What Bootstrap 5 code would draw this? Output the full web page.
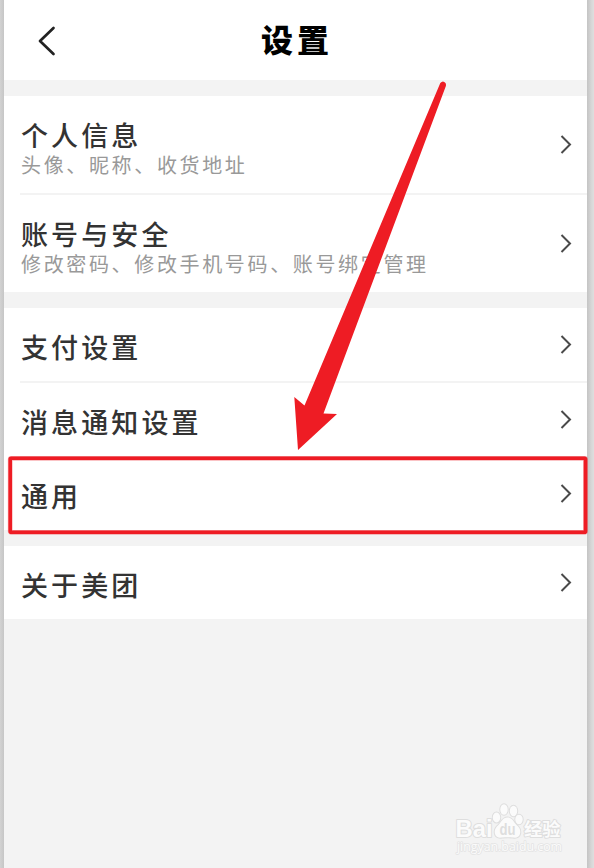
<!DOCTYPE html>
<html lang="zh-CN">
<head>
<meta charset="utf-8">
<meta name="viewport" content="width=device-width, initial-scale=1">
<title>设置</title>
<link href="https://cdn.jsdelivr.net/npm/bootstrap@5.3.0/dist/css/bootstrap.min.css" rel="stylesheet">
<style>
body{background:linear-gradient(90deg,#d2d2d2 0,#c6c6c6 4px,#c6c6c6 586px,#c4c4c4 587px,#d9d9d9 592px,#dedede 594px);font-family:"Noto Sans CJK SC",sans-serif;overflow:hidden}
.screen{width:583px;height:868px;margin-left:4px;background:#f3f3f3}
.topbar{height:80px}
.back{width:20px;height:32px;margin:25px 0 0 32px}
.topbar h1{font-size:32px;line-height:40px;letter-spacing:4px;margin:18px 0 0 205px;font-weight:900;color:#000}
.group{margin-top:16px}
.setting{margin-left:16px;padding-right:15px;color:#333}
.setting+.setting{border-top:2px solid #f3f3f3}
.name{font-size:27px;line-height:30px;letter-spacing:3.1px;font-weight:500;padding-left:1px}
.desc{font-size:20px;line-height:26px;letter-spacing:2.65px;color:#999;white-space:nowrap;padding:2px 0 0 1px}
.chev{width:13px;height:20px;flex:none}
.tall{height:97px;padding-top:24px}
.tall .chev{margin-top:15px}
.short{height:73px;padding-top:24px}
.short .chev{margin-top:3px}
.setting+.tall{height:99px}
.setting+.short{height:75px}
.setting+.short:last-child{height:74px;padding-top:23px}
.marks{left:0;top:0;pointer-events:none}
</style>
</head>
<body>
<main class="screen">
  <header class="topbar bg-white d-flex align-items-start">
    <svg class="back" viewBox="0 0 20 32"><path d="M17.500 3 4 16 17.500 29" fill="none" stroke="#222" stroke-width="2.700" stroke-linecap="round" stroke-linejoin="round"/></svg>
    <h1>设置</h1>
  </header>
  <section class="group bg-white">
    <div class="setting tall d-flex justify-content-between align-items-start">
      <div><div class="name">个人信息</div><div class="desc">头像、昵称、收货地址</div></div>
      <svg class="chev" viewBox="0 0 13 20"><path d="M2.500 1 11 9.500 2.500 18" fill="none" stroke="#4a4a4a" stroke-width="2"/></svg>
    </div>
    <div class="setting tall d-flex justify-content-between align-items-start">
      <div><div class="name">账号与安全</div><div class="desc">修改密码、修改手机号码、账号绑定管理</div></div>
      <svg class="chev" viewBox="0 0 13 20"><path d="M2.500 1 11 9.500 2.500 18" fill="none" stroke="#4a4a4a" stroke-width="2"/></svg>
    </div>
  </section>
  <section class="group bg-white">
    <div class="setting short d-flex justify-content-between align-items-start">
      <div class="name">支付设置</div>
      <svg class="chev" viewBox="0 0 13 20"><path d="M2.500 1 11 9.500 2.500 18" fill="none" stroke="#4a4a4a" stroke-width="2"/></svg>
    </div>
    <div class="setting short d-flex justify-content-between align-items-start">
      <div class="name">消息通知设置</div>
      <svg class="chev" viewBox="0 0 13 20"><path d="M2.500 1 11 9.500 2.500 18" fill="none" stroke="#4a4a4a" stroke-width="2"/></svg>
    </div>
    <div class="setting short d-flex justify-content-between align-items-start">
      <div class="name">通用</div>
      <svg class="chev" viewBox="0 0 13 20"><path d="M2.500 1 11 9.500 2.500 18" fill="none" stroke="#4a4a4a" stroke-width="2"/></svg>
    </div>
  </section>
  <section class="group bg-white">
    <div class="setting short d-flex justify-content-between align-items-start">
      <div class="name">关于美团</div>
      <svg class="chev" viewBox="0 0 13 20"><path d="M2.500 1 11 9.500 2.500 18" fill="none" stroke="#4a4a4a" stroke-width="2"/></svg>
    </div>
  </section>
</main>

<!-- annotation layer: arrow, highlight frame and watermark -->
<svg class="marks position-absolute" width="594" height="868" viewBox="0 0 594 868">
  <path d="M440.300 83Q443 80 445.500 83 446.500 85 445.500 87L323.500 413.500 337 414 298 450 294.300 397 304.500 405.500Z" fill="#ee1c24"/>
  <rect x="10.200" y="458.300" width="575.300" height="74" rx="1" fill="none" stroke="#ee1c24" stroke-opacity=".35" stroke-width="4.800"/>
  <rect x="10.200" y="458.300" width="575.300" height="74" rx="1" fill="none" stroke="#ee1c24" stroke-width="3.600"/>
  <g fill="#fbfbfb" stroke="#dedede" stroke-width="2" paint-order="stroke" stroke-linejoin="round">
    <text x="455.500" y="837" font-family="Liberation Sans" font-weight="700" font-size="23.500" textLength="37" lengthAdjust="spacingAndGlyphs">Bai</text>
    <ellipse cx="496.500" cy="817.500" rx="3.700" ry="5"/>
    <ellipse cx="504" cy="809.500" rx="3.700" ry="5.200"/>
    <ellipse cx="513.500" cy="811" rx="3.700" ry="5.200"/>
    <ellipse cx="519" cy="819.500" rx="3.700" ry="4.800"/>
    <path d="M507.500 817.500c5 0 6 4.500 9 7.500 3 2.500 4.500 5 3.500 9-1 3.500-4 4-7 3.500-4-.500-7-.500-11 0-3 .500-6 0-7-3.500s.500-6.500 3.500-9c3-3 4-7.500 9-7.500z"/>
    <text x="499.500" y="835" font-family="Liberation Sans" font-weight="700" font-size="16" textLength="16" lengthAdjust="spacingAndGlyphs" fill="#dedede" stroke="none">du</text>
    <text x="524" y="836" font-family="Noto Sans CJK SC" font-weight="700" font-size="18" textLength="36.500" lengthAdjust="spacingAndGlyphs">经验</text>
    <text x="457" y="851" font-family="Open Sans" font-size="12" stroke="#e3e3e3" stroke-width="1.500" textLength="105" lengthAdjust="spacingAndGlyphs">jingyan.baidu.com</text>
  </g>
</svg>
<script src="https://cdn.jsdelivr.net/npm/bootstrap@5.3.0/dist/js/bootstrap.bundle.min.js"></script>
</body>
</html>
